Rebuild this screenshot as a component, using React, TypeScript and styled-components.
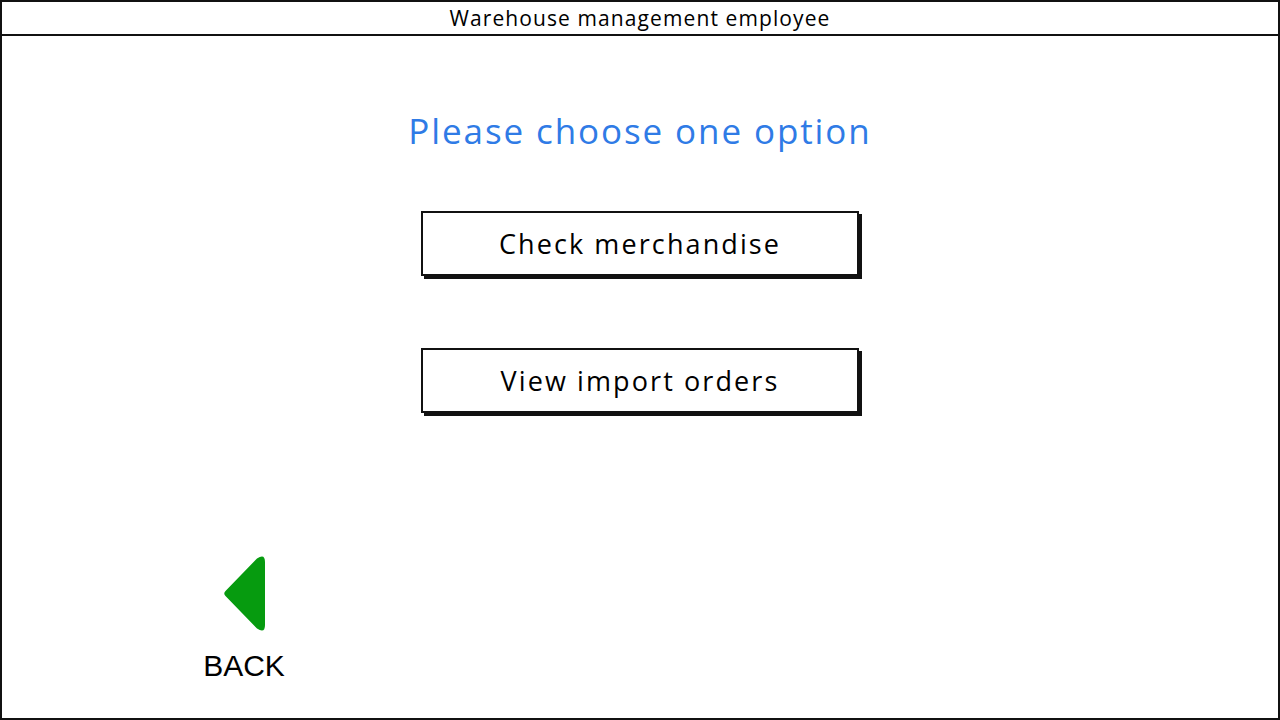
import { FC } from 'react';
import styled, { createGlobalStyle } from 'styled-components';

const GlobalStyle = createGlobalStyle`
  html, body {
    margin: 0;
    padding: 0;
    background: #fff;
  }
  * {
    box-sizing: border-box;
  }
`;

const options = ['Check merchandise', 'View import orders'];

const App: FC = () => {
  return (
    <>
      <GlobalStyle />
      <Frame>
        <TitleBar>Warehouse management employee</TitleBar>
        <Content>
          <Heading>Please choose one option</Heading>
          <OptionList>
            {options.map((label) => (
              <OptionButton key={label}>{label}</OptionButton>
            ))}
          </OptionList>
          <BackButton>
            <svg width="43" height="75" viewBox="0 0 43 75">
              <path
                d="M2.5 40 Q0 37.5 2.5 35 L34 2.5 Q42 -3 42 6 L42 69 Q42 78 34 72.5 Z"
                fill="#069b0f"
              />
            </svg>
            <BackLabel>BACK</BackLabel>
          </BackButton>
        </Content>
      </Frame>
    </>
  );
};

export default App;

const Frame = styled.div`
  width: 1280px;
  height: 720px;
  border: 2px solid #111;
  display: flex;
  flex-direction: column;
  font-family: 'Open Sans', 'Noto Sans', sans-serif;
`;

const TitleBar = styled.div`
  height: 34px;
  border-bottom: 2px solid #111;
  display: flex;
  align-items: center;
  justify-content: center;
  font-size: 21px;
  letter-spacing: 1.1px;
  color: #000;
`;

const Content = styled.div`
  flex: 1;
  display: flex;
  flex-direction: column;
  align-items: center;
  padding-top: 71px;
`;

const Heading = styled.h1`
  margin: 0;
  font-size: 35px;
  font-weight: 400;
  line-height: 48px;
  letter-spacing: 1.9px;
  color: #2f7be6;
`;

const OptionList = styled.div`
  display: flex;
  flex-direction: column;
  gap: 72px;
  margin-top: 56px;
`;

const OptionButton = styled.button`
  width: 438px;
  height: 65px;
  border: 2px solid #111;
  background: #fff;
  box-shadow: 3px 3px 0 #111;
  font-family: 'Open Sans', 'Noto Sans', sans-serif;
  font-size: 27px;
  letter-spacing: 2.1px;
  color: #000;
  padding: 0;
  cursor: pointer;
`;

const BackButton = styled.div`
  align-self: flex-start;
  margin-top: auto;
  margin-left: 200px;
  margin-bottom: 36px;
  display: flex;
  flex-direction: column;
  align-items: center;
  width: 84px;
`;

const BackLabel = styled.span`
  margin-top: 19px;
  font-family: 'Liberation Sans', Arial, sans-serif;
  font-size: 30px;
  line-height: 32px;
  color: #000;
`;
